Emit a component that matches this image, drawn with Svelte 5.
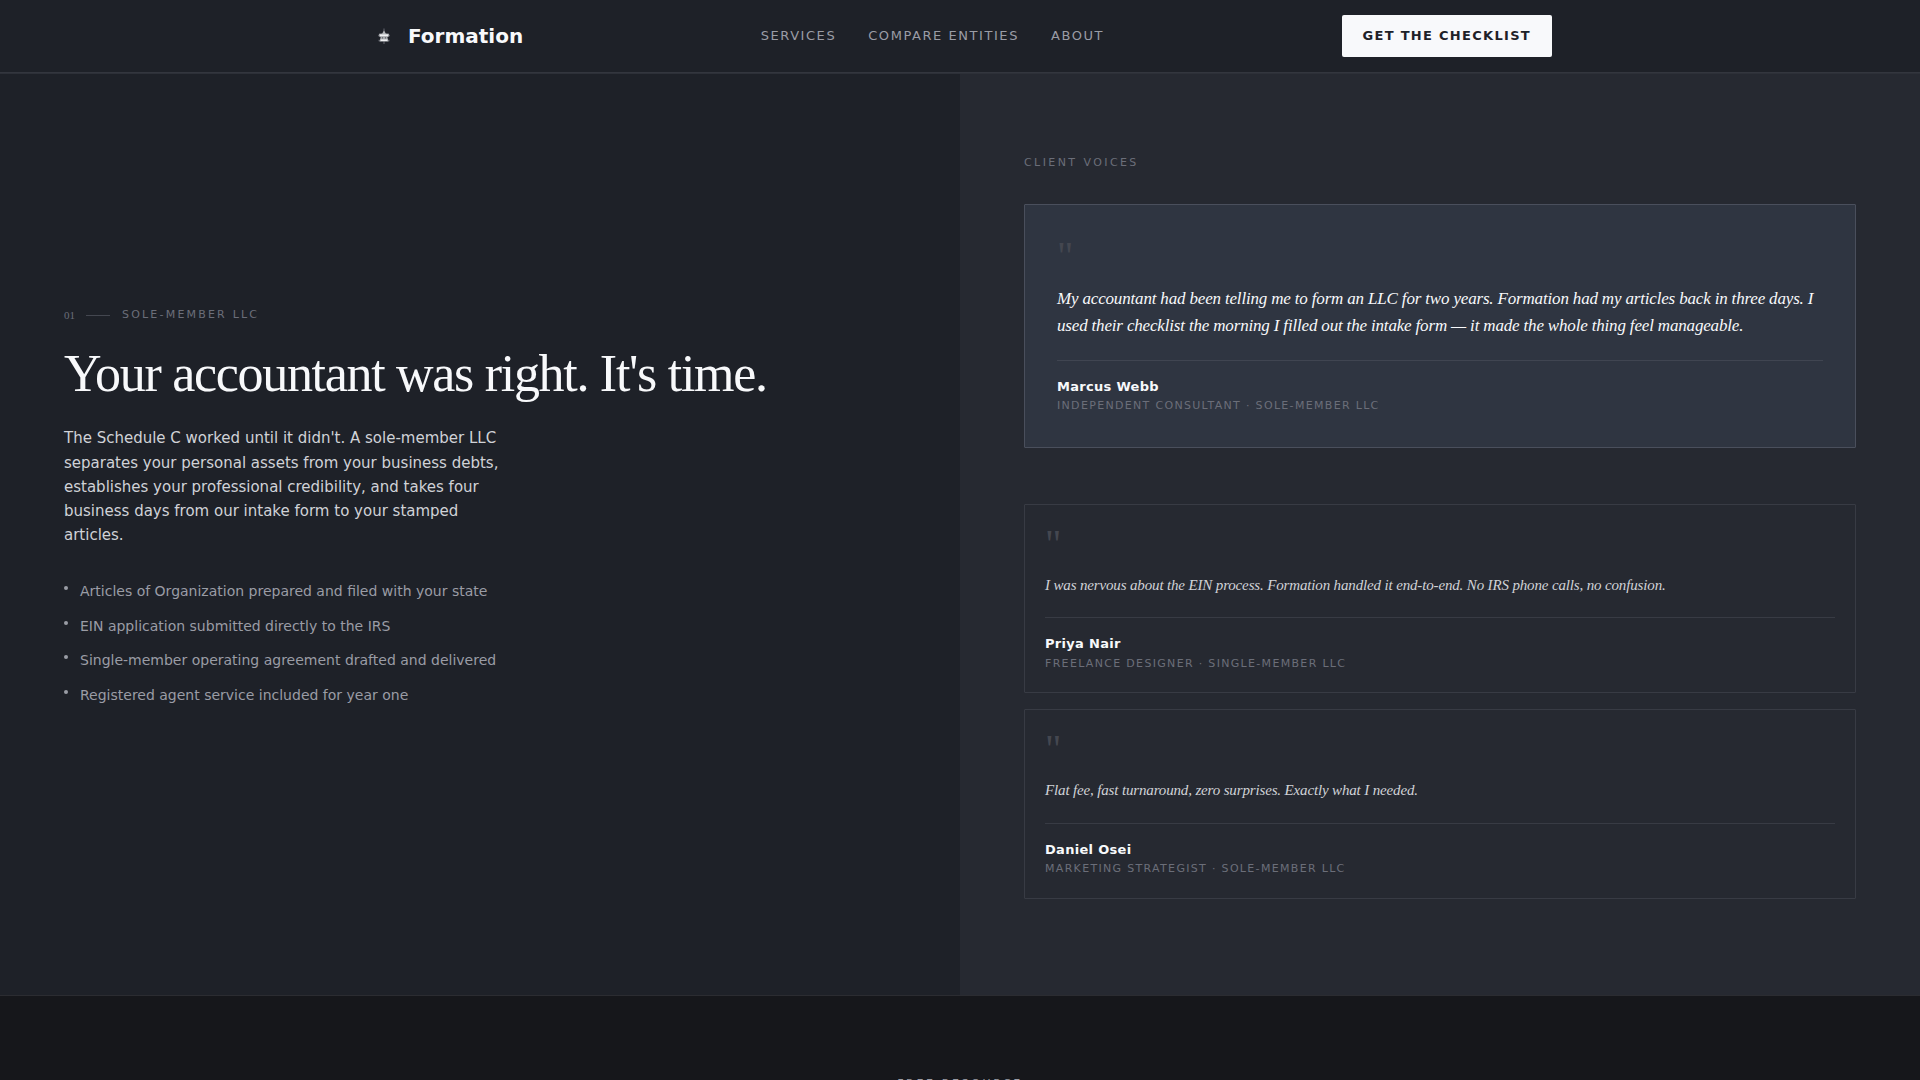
<script lang="ts">
	interface Voice {
		quote: string;
		name: string;
		role: string;
		featured?: boolean;
	}

	const links = ['Services', 'Compare Entities', 'About'];

	const features = [
		'Articles of Organization prepared and filed with your state',
		'EIN application submitted directly to the IRS',
		'Single-member operating agreement drafted and delivered',
		'Registered agent service included for year one'
	];

	const voices: Voice[] = [
		{
			quote:
				'My accountant had been telling me to form an LLC for two years. Formation had my articles back in three days. I used their checklist the morning I filled out the intake form — it made the whole thing feel manageable.',
			name: 'Marcus Webb',
			role: 'Independent Consultant · Sole-Member LLC',
			featured: true
		},
		{
			quote:
				'I was nervous about the EIN process. Formation handled it end-to-end. No IRS phone calls, no confusion.',
			name: 'Priya Nair',
			role: 'Freelance Designer · Single-Member LLC'
		},
		{
			quote: 'Flat fee, fast turnaround, zero surprises. Exactly what I needed.',
			name: 'Daniel Osei',
			role: 'Marketing Strategist · Sole-Member LLC'
		}
	];
</script>

<div class="page">
	<header>
		<div class="bar">
			<a class="brand" href="#top">
				<svg width="32" height="32" viewBox="0 0 32 32" aria-hidden="true">
					<path d="M16 8.500V24" stroke="#666970" stroke-width="1" />
					<path d="M10 15.500h12M10.500 20.500h11" stroke="#5c5f66" stroke-width="1.500" />
					<path
						d="M16 10.500 17.800 13.500 21 13.800 20.800 16.500 19.300 17.200 20.500 21.500H11.500L12.700 17.200 11.200 16.500 11 13.800 14.200 13.500Z"
						fill="#b4b6ba"
					/>
					<path d="M12 15.200h8M12.800 20.300h6.400" stroke="#f0f1f3" stroke-width="1.500" />
					<path d="M13.800 17.800h1.400M16.800 17.800h1.400" stroke="#55585f" stroke-width="1.200" />
				</svg>
				<span>Formation</span>
			</a>
			<nav>
				{#each links as link}
					<a href="#top">{link}</a>
				{/each}
			</nav>
			<a class="cta" href="#top">Get the checklist</a>
		</div>
	</header>

	<main>
		<section class="intro">
			<div class="eyebrow">
				<span class="num">01</span>
				<span class="rule"></span>
				<span class="label">Sole-Member LLC</span>
			</div>
			<h1>Your accountant was right. It's time.</h1>
			<p>
				The Schedule C worked until it didn't. A sole-member LLC separates your personal assets from
				your business debts, establishes your professional credibility, and takes four business days
				from our intake form to your stamped articles.
			</p>
			<ul>
				{#each features as feature}
					<li>{feature}</li>
				{/each}
			</ul>
		</section>

		<section class="voices">
			<h2>Client Voices</h2>
			{#each voices as voice}
				<article class:featured={voice.featured}>
					<div class="mark">"</div>
					<blockquote>{voice.quote}</blockquote>
					<footer>
						<div class="name">{voice.name}</div>
						<div class="role">{voice.role}</div>
					</footer>
				</article>
			{/each}
		</section>
	</main>

	<section class="resource">
		<h2>Free Resource</h2>
	</section>
</div>

<style>
	:global(body) {
		background: #16171b;
		overflow: hidden;
	}

	.page {
		height: 1080px;
		overflow: hidden;
		display: flex;
		flex-direction: column;
		font-family: 'DejaVu Sans', sans-serif;
		color: #f8f9fb;
	}

	a {
		color: inherit;
		text-decoration: none;
	}

	header {
		flex: none;
		height: 72px;
		background: #1e2128;
		border-bottom: 1px solid #33363e;
	}

	.bar {
		width: 1184px;
		height: 72px;
		margin: 0 auto;
		display: flex;
		align-items: center;
		justify-content: space-between;
	}

	.brand {
		display: flex;
		align-items: center;
		gap: 8px;
		font-size: 20px;
		font-weight: 700;
	}

	nav {
		display: flex;
		gap: 32px;
		padding-bottom: 2px;
		font-size: 13px;
		letter-spacing: 1.56px;
		text-transform: uppercase;
		color: #9a9ca5;
	}

	.cta {
		box-sizing: border-box;
		height: 42px;
		padding: 0 21px;
		line-height: 42px;
		border-radius: 2px;
		background: #f8f9fb;
		color: #1e2128;
		font-size: 13px;
		font-weight: 700;
		letter-spacing: 1.3px;
		text-transform: uppercase;
	}

	main {
		flex: none;
		height: 921px;
		display: grid;
		grid-template-columns: 1fr 1fr;
		border-top: 1px solid #2d3038;
		border-bottom: 1px solid #2b2c31;
	}

	.intro {
		padding: 0 64px 55.6px;
		background: #1e2128;
		display: flex;
		flex-direction: column;
		justify-content: center;
	}

	.eyebrow {
		display: flex;
		align-items: center;
		gap: 12px;
		height: 17px;
		font-size: 11px;
		letter-spacing: 2.2px;
		text-transform: uppercase;
		color: #6b6e79;
	}

	.num {
		margin-right: -1px;
		font-family: 'Liberation Serif', serif;
		letter-spacing: 0;
	}

	.label {
		padding-bottom: 2px;
	}

	.rule {
		width: 24px;
		height: 1px;
		background: #444750;
	}

	h1 {
		margin: 20.4px 0 22px;
		font-family: 'Liberation Serif', serif;
		font-size: 52px;
		line-height: 60px;
		font-weight: 400;
		letter-spacing: -1.3px;
	}

	p {
		width: 440px;
		margin: 0 0 32.4px;
		font-size: 15px;
		line-height: 24.3px;
		color: #d0d2d7;
	}

	ul {
		margin: 0;
		padding: 0;
		list-style: none;
		display: grid;
		gap: 12px;
	}

	li {
		position: relative;
		padding-left: 16px;
		font-size: 14px;
		line-height: 22.6px;
		color: #9a9ca5;
	}

	li::before {
		content: '';
		position: absolute;
		left: 0;
		top: 6px;
		width: 4px;
		height: 4px;
		border-radius: 50%;
		background: #9a9ca5;
	}

	.voices {
		padding: 80px 64px 0;
		background: #262931;
	}

	h2 {
		margin: 0;
		font-size: 11px;
		line-height: 18px;
		font-weight: 400;
		letter-spacing: 2.42px;
		text-transform: uppercase;
		color: #6b6e79;
	}

	.voices h2 {
		margin-bottom: 32px;
	}

	article {
		box-sizing: border-box;
		height: 189.4px;
		margin-bottom: 16px;
		padding: 20px;
		border: 1px solid #383b44;
		border-radius: 1px;
	}

	.featured {
		height: 244px;
		margin-bottom: 56px;
		padding: 32px;
		background: #2f3541;
		border-color: #4a4f5c;
	}

	.mark {
		height: 40px;
		font-family: 'Liberation Serif', serif;
		font-size: 40px;
		line-height: 38px;
		color: #444750;
	}

	blockquote {
		margin: 8px 0 20.3px;
		font-family: 'Liberation Serif', serif;
		font-style: italic;
		font-size: 15px;
		line-height: 24px;
		letter-spacing: -0.15px;
		color: #d0d2d7;
	}

	.featured blockquote {
		margin-bottom: 21px;
		font-size: 17px;
		line-height: 27.2px;
		letter-spacing: -0.17px;
		color: #f8f9fb;
	}

	article footer {
		padding-top: 16px;
		border-top: 1px solid #383b44;
	}

	.featured footer {
		border-color: #404551;
	}

	.name {
		font-size: 13px;
		line-height: 20.5px;
		font-weight: 700;
		letter-spacing: 0.3px;
	}

	.role {
		font-size: 11px;
		line-height: 17.6px;
		letter-spacing: 1.32px;
		text-transform: uppercase;
		color: #6b6e79;
	}

	.featured .name {
		line-height: 20px;
	}

	.resource {
		flex: 1;
		padding-top: 79px;
		background: #16171b;
		text-align: center;
	}

	.resource h2 {
		letter-spacing: 2.64px;
		color: #9a9ca5;
	}
</style>
